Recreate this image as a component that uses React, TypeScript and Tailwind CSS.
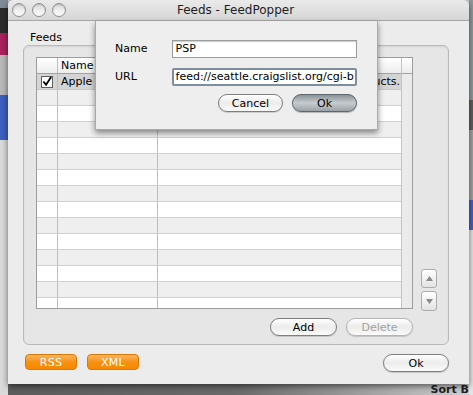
import React from "react";

const font = { fontFamily: '"Lucida Grande", "DejaVu Sans", sans-serif' };

function TrafficLight() {
  return (
    <div className="w-[14px] h-[14px] rounded-full border border-[#8f8f8f] bg-gradient-to-b from-[#d6d6d6] via-[#eeeeee] to-[#fafafa] shadow-[inset_0_1px_1px_rgba(0,0,0,0.15)]" />
  );
}

function AquaButton({ label, w, disabled, primary }: { label: string; w: string; disabled?: boolean; primary?: boolean }) {
  const base = "h-[18px] rounded-full flex items-center justify-center text-[11px] leading-none";
  if (primary) {
    return (
      <div className={`${base} ${w} border border-[#5f666d] bg-gradient-to-b from-[#8b939a] via-[#c7ccd0] to-[#9aa1a8] text-black shadow-[0_1px_1px_rgba(0,0,0,0.25)]`}>
        {label}
      </div>
    );
  }
  return (
    <div
      className={`${base} ${w} border ${disabled ? "border-[#b5b5b5] text-[#a3a3a3]" : "border-[#7e7e7e] text-black"} bg-gradient-to-b from-[#ffffff] via-[#ececec] to-[#fbfbfb] shadow-[0_1px_1px_rgba(0,0,0,0.15)]`}
    >
      {label}
    </div>
  );
}

function OrangeButton({ label }: { label: string }) {
  return (
    <div className="w-[52px] h-[16px] rounded-[4px] border border-[#d8780a] bg-gradient-to-b from-[#ffb455] via-[#f7910f] to-[#f58a00] flex items-center justify-center text-[11px] leading-none text-white tracking-wide">
      {label}
    </div>
  );
}

function Row({ i }: { i: number }) {
  const bg = i % 2 === 1 ? "bg-[#efefef]" : "bg-white";
  return (
    <div className={`flex h-[16px] shrink-0 border-b border-[#d0d0d0] ${bg}`}>
      <div className="w-[21px] border-r border-[#bdbdbd]" />
      <div className="w-[100px] border-r border-[#bdbdbd]" />
      <div className="flex-1" />
    </div>
  );
}

export default function App() {
  const rows = Array.from({ length: 14 }, (_, i) => i + 1);

  return (
    <div className="flex w-[473px] h-[395px] overflow-hidden bg-[#cfcfcf]" style={font}>
      {/* desktop bits on the left */}
      <div className="w-[8px] h-full flex flex-col">
        <div className="h-[8px] bg-[#7f8b98]" />
        <div className="h-[25px] bg-[#2c2c2c]" />
        <div className="h-[22px] bg-[#a8235d]" />
        <div className="h-[40px] bg-[#b9b9b9]" />
        <div className="h-[45px] bg-[#3d5fbf]" />
        <div className="flex-1 bg-[#dadada]" />
      </div>

      <div className="flex flex-col w-[461px] h-full">
        {/* window */}
        <div className="relative w-[461px] h-[388px] rounded-t-[6px] bg-[#ececec] shadow-[0_2px_6px_rgba(0,0,0,0.55)] flex flex-col">
          {/* title bar */}
          <div className="relative h-[21px] shrink-0 rounded-t-[6px] bg-gradient-to-b from-[#eaeaea] to-[#d6d6d6] border-b border-[#a6a6a6] flex items-center">
            <div className="flex gap-[6px] pl-[4px]">
              <TrafficLight />
              <TrafficLight />
              <TrafficLight />
            </div>
            <div className="flex-1 text-center text-[12px] text-[#1e1e1e] pr-[64px]">Feeds - FeedPopper</div>
          </div>

          {/* content */}
          <div className="flex flex-col pl-[15px] pt-[10px]">
            <div className="text-[11px] leading-[13px] pl-[7px] text-black">Feeds</div>

            <div className="mt-[1px] w-[426px] h-[300px] rounded-[6px] border border-[#b9b9b9] bg-[#e6e6e6] pl-[12px] pt-[11px] shadow-[inset_0_1px_2px_rgba(0,0,0,0.08)]">
              <div className="flex items-end">
                <div className="flex flex-col">
                  {/* table */}
                  <div className="w-[377px] h-[252px] border border-[#9c9c9c] flex overflow-hidden bg-white">
                    <div className="w-[364px] flex flex-col overflow-hidden">
                      <div className="flex h-[16px] shrink-0 border-b border-[#a3a3a3] bg-gradient-to-b from-white to-[#ededed] text-[11px] leading-none">
                        <div className="w-[21px] border-r border-[#bdbdbd]" />
                        <div className="w-[100px] border-r border-[#bdbdbd] flex items-center pl-[3px]">Name</div>
                        <div className="flex-1" />
                      </div>
                      <div className="flex h-[16px] shrink-0 border-b border-[#c8c8c8] bg-[#d4d4d4] text-[11px] leading-none">
                        <div className="w-[21px] border-r border-[#bdbdbd] flex items-center justify-center">
                          <div className="w-[12px] h-[12px] border border-[#5f5f5f] bg-white flex items-center justify-center">
                            <svg width="11" height="11" viewBox="0 0 11 11">
                              <path d="M1.5 5.5 L4.5 9 L10 0.5" fill="none" stroke="#000" strokeWidth="2" />
                            </svg>
                          </div>
                        </div>
                        <div className="w-[100px] border-r border-[#bdbdbd] flex items-center pl-[3px]">Apple</div>
                        <div className="flex-1 flex items-center justify-end pr-[1px] overflow-hidden whitespace-nowrap">
                          products.
                        </div>
                      </div>
                      {rows.map((i) => (
                        <Row key={i} i={i} />
                      ))}
                    </div>
                    <div className="flex-1 flex flex-col border-l border-[#c4c4c4]">
                      <div className="h-[16px] shrink-0 border-b border-[#a3a3a3] bg-gradient-to-b from-white to-[#ededed]" />
                      <div className="flex-1 bg-[#ebebeb]" />
                    </div>
                  </div>

                  <div className="flex justify-end gap-[9px] mt-[9px]">
                    <AquaButton label="Add" w="w-[67px]" />
                    <AquaButton label="Delete" w="w-[67px]" disabled />
                  </div>
                </div>

                <div className="flex flex-col gap-[3px] ml-[8px] mb-[25px]">
                  <div className="w-[16px] h-[19px] rounded-[3px] border border-[#acacac] bg-gradient-to-b from-white to-[#e3e3e3] flex items-center justify-center">
                    <svg width="7" height="5" viewBox="0 0 7 5">
                      <path d="M3.5 0 L7 5 L0 5 Z" fill="#8a8a8a" />
                    </svg>
                  </div>
                  <div className="w-[16px] h-[20px] rounded-[3px] border border-[#acacac] bg-gradient-to-b from-white to-[#e3e3e3] flex items-center justify-center">
                    <svg width="7" height="5" viewBox="0 0 7 5">
                      <path d="M0 0 L7 0 L3.5 5 Z" fill="#8a8a8a" />
                    </svg>
                  </div>
                </div>
              </div>
            </div>

            {/* bottom row */}
            <div className="flex items-start mt-[9px] w-[426px] pl-[2px]">
              <div className="flex gap-[10px]">
                <OrangeButton label="RSS" />
                <OrangeButton label="XML" />
              </div>
              <div className="ml-auto">
                <AquaButton label="Ok" w="w-[66px]" />
              </div>
            </div>
          </div>

          {/* sheet */}
          <div className="absolute left-[87px] top-[21px] w-[283px] h-[109px] bg-[#eeeeee] border-x border-b border-[#a9a9a9] shadow-[0_3px_6px_rgba(0,0,0,0.45)] pt-[19px] pl-[19px] pr-[20px] text-[11px]">
            <div className="flex items-center h-[18px]">
              <div className="w-[57px]">Name</div>
              <div className="w-[187px] h-[18px] border border-[#9b9b9b] bg-white shadow-[inset_0_1px_1px_rgba(0,0,0,0.2)] flex items-center pl-[3px]">PSP</div>
            </div>
            <div className="flex items-center h-[18px] mt-[10px]">
              <div className="w-[57px]">URL</div>
              <div className="w-[187px] h-[18px] rounded-[2px] border-2 border-[#7f8d9c] bg-white flex items-center pl-[2px] whitespace-nowrap">
                feed://seattle.craigslist.org/cgi-b
              </div>
            </div>
            <div className="flex justify-end gap-[9px] mt-[8px]">
              <AquaButton label="Cancel" w="w-[65px]" />
              <AquaButton label="Ok" w="w-[65px]" primary />
            </div>
          </div>
        </div>

        {/* desktop strip under the window */}
        <div className="flex-1 bg-gradient-to-r from-[#5c5c5c] via-[#6a6a6a] to-[#cfcfcf] flex justify-end items-end">
          <span className="text-[11px] leading-none font-bold text-[#222]">Sort B</span>
        </div>
      </div>

      {/* desktop bits on the right */}
      <div className="w-[4px] h-full flex flex-col">
        <div className="h-[100px] bg-[#8e9a9c]" />
        <div className="h-[30px] bg-[#5f5f5f]" />
        <div className="h-[70px] bg-[#a2a2a2]" />
        <div className="h-[30px] bg-[#4262c0]" />
        <div className="flex-1 bg-[#e4e4e4]" />
      </div>
    </div>
  );
}
